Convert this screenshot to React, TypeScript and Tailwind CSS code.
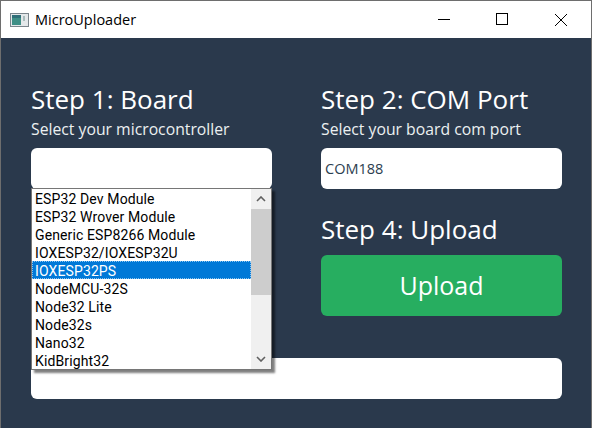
const boards = [
  "ESP32 Dev Module",
  "ESP32 Wrover Module",
  "Generic ESP8266 Module",
  "IOXESP32/IOXESP32U",
  "IOXESP32PS",
  "NodeMCU-32S",
  "Node32 Lite",
  "Node32s",
  "Nano32",
  "KidBright32",
];

function TitleBar() {
  return (
    <div className="flex h-[38px] shrink-0 items-center bg-white border-t border-x border-[#6e6e6e] text-black">
      <svg width="19" height="14" viewBox="0 0 19 14" className="ml-[9px]">
        <rect x="0.5" y="0.5" width="18" height="13" fill="#e4e8ea" stroke="#7b858c" />
        <rect x="2" y="2" width="9" height="10" fill="#3f8f86" />
        <rect x="2" y="2" width="9" height="3" fill="#2f6f78" />
        <rect x="13" y="3" width="2" height="5" fill="#a9bcbc" />
      </svg>
      <span className="ml-[6px] text-[14.5px] font-['Open_Sans','Noto_Sans',sans-serif]">MicroUploader</span>
      <div className="ml-auto flex h-full items-center">
        <svg width="46" height="37" viewBox="0 0 46 37" className="mr-[12px]">
          <line x1="17" y1="18.5" x2="29" y2="18.5" stroke="#000" />
        </svg>
        <svg width="46" height="37" viewBox="0 0 46 37" className="mr-[13px]">
          <rect x="17.5" y="12.5" width="11" height="11" fill="none" stroke="#000" />
        </svg>
        <svg width="46" height="37" viewBox="0 0 46 37" className="mr-[7px]">
          <path d="M17 13 L29 25 M29 13 L17 25" stroke="#000" fill="none" />
        </svg>
      </div>
    </div>
  );
}

function Dropdown() {
  return (
    <div className="absolute left-0 top-[40px] z-10 flex h-[182px] w-[241px] border border-[#767676] bg-white shadow-[3px_3px_2px_rgba(0,0,0,0.5)]">
      <ul className="w-[219px] shrink-0 text-[14px] leading-[18px] tracking-[0.12px] text-black font-['Roboto',sans-serif]">
        {boards.map((b) => (
          <li
            key={b}
            className={
              b === "IOXESP32PS"
                ? "h-[18px] pl-[3px] pt-px bg-[#0078d7] text-white outline-1 -outline-offset-1 outline-dotted outline-[#8cc4f0]"
                : "h-[18px] pl-[3px] pt-px"
            }
          >
            {b}
          </li>
        ))}
      </ul>
      <div className="flex w-[20px] flex-col bg-[#f0f0f0]">
        <div className="flex h-[20px] items-center justify-center">
          <svg width="10" height="6" viewBox="0 0 10 6">
            <path d="M1 5 L5 1 L9 5" fill="none" stroke="#606060" strokeWidth="1.6" />
          </svg>
        </div>
        <div className="h-[86px] bg-[#cdcdcd]" />
        <div className="mt-auto flex h-[20px] items-center justify-center">
          <svg width="10" height="6" viewBox="0 0 10 6">
            <path d="M1 1 L5 5 L9 1" fill="none" stroke="#606060" strokeWidth="1.6" />
          </svg>
        </div>
      </div>
    </div>
  );
}

export default function App() {
  return (
    <div className="flex h-[428px] w-[592px] flex-col overflow-hidden bg-[#2a394c] font-['Open_Sans',sans-serif]">
      <TitleBar />
      <div className="flex flex-1 flex-col border-x border-[#6e6e6e] bg-[#2a394c] pl-[30px] pr-[29px] pt-[43px]">
        <div className="flex gap-[49px]">
          {/* Board */}
          <div className="relative w-[241px]">
            <h1 className="text-[26px] leading-[36px] text-white">Step 1: Board</h1>
            <p className="mt-px text-[15.75px] leading-[22px] text-[#ecf0f1]">Select your microcontroller</p>
            <div className="relative mt-[8px]">
              <div className="h-[41px] rounded-[6px] bg-white" />
              <Dropdown />
            </div>
          </div>

          {/* COM port + upload */}
          <div className="w-[241px]">
            <h1 className="text-[26px] leading-[36px] text-white">Step 2: COM Port</h1>
            <p className="mt-px text-[15.75px] leading-[22px] text-[#ecf0f1]">Select your board com port</p>
            <div className="mt-[8px] flex h-[41px] items-center rounded-[6px] bg-white pl-[4px] pt-px text-[14.5px] text-[#2c3e50]">
              COM188
            </div>
            <h1 className="mt-[22px] text-[26px] leading-[36px] text-white">Step 4: Upload</h1>
            <div className="mt-[8px] flex h-[61px] items-center justify-center rounded-[6px] bg-[#27ae60] text-[25px] text-white">
              Upload
            </div>
          </div>
        </div>
        <div className="mt-[42px] h-[41px] rounded-[6px] bg-white" />
      </div>
    </div>
  );
}
